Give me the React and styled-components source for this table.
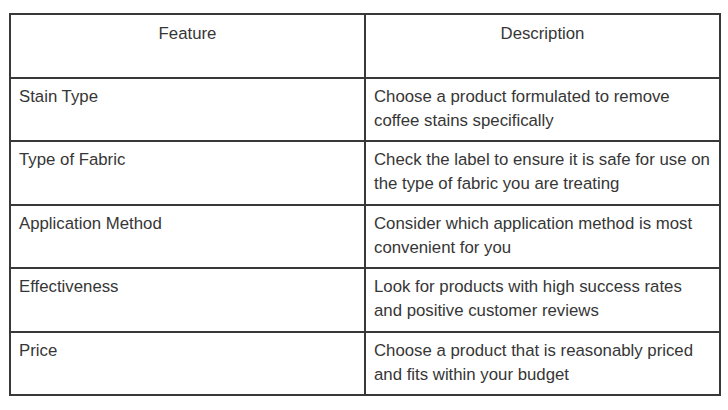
import React from 'react';
import styled, { createGlobalStyle } from 'styled-components';

const GlobalStyle = createGlobalStyle`
  html, body {
    margin: 0;
    padding: 0;
    background: #ffffff;
  }
  body {
    font-family: 'Liberation Sans', Arial, sans-serif;
    color: #363636;
  }
`;

const Page = styled.div`
  width: 728px;
  height: 410px;
  padding: 13px 0 0 9px;
  box-sizing: border-box;
`;

const Table = styled.table`
  width: 712px;
  border-collapse: collapse;
  table-layout: fixed;
  border: 2px solid #383838;
`;

const Row = styled.tr`
  height: 63.5px;
`;

const HeadCell = styled.th`
  width: 50%;
  border: 2px solid #383838;
  padding: 7px 8px;
  vertical-align: top;
  text-align: center;
  font-weight: normal;
  font-size: 16.8px;
  line-height: 24px;
  color: #363636;
`;

const Cell = styled.td`
  border: 2px solid #383838;
  padding: 6px 2px 6px 8px;
  vertical-align: top;
  text-align: left;
  font-size: 16.8px;
  line-height: 24px;
  color: #363636;
`;

const Line = styled.span`
  display: block;
  white-space: nowrap;
`;

// lines broken where the source table breaks them
const rows = [
  {
    feature: 'Stain Type',
    description: ['Choose a product formulated to remove', 'coffee stains specifically'],
  },
  {
    feature: 'Type of Fabric',
    description: ['Check the label to ensure it is safe for use on', 'the type of fabric you are treating'],
  },
  {
    feature: 'Application Method',
    description: ['Consider which application method is most', 'convenient for you'],
  },
  {
    feature: 'Effectiveness',
    description: ['Look for products with high success rates', 'and positive customer reviews'],
  },
  {
    feature: 'Price',
    description: ['Choose a product that is reasonably priced', 'and fits within your budget'],
  },
];

function App() {
  return (
    <>
      <GlobalStyle />
      <Page>
        <Table>
          <thead>
            <Row>
              <HeadCell>Feature</HeadCell>
              <HeadCell>Description</HeadCell>
            </Row>
          </thead>
          <tbody>
            {rows.map((row) => (
              <Row key={row.feature}>
                <Cell>{row.feature}</Cell>
                <Cell>
                  {row.description.map((line) => (
                    <Line key={line}>{line}</Line>
                  ))}
                </Cell>
              </Row>
            ))}
          </tbody>
        </Table>
      </Page>
    </>
  );
}

export default App;
